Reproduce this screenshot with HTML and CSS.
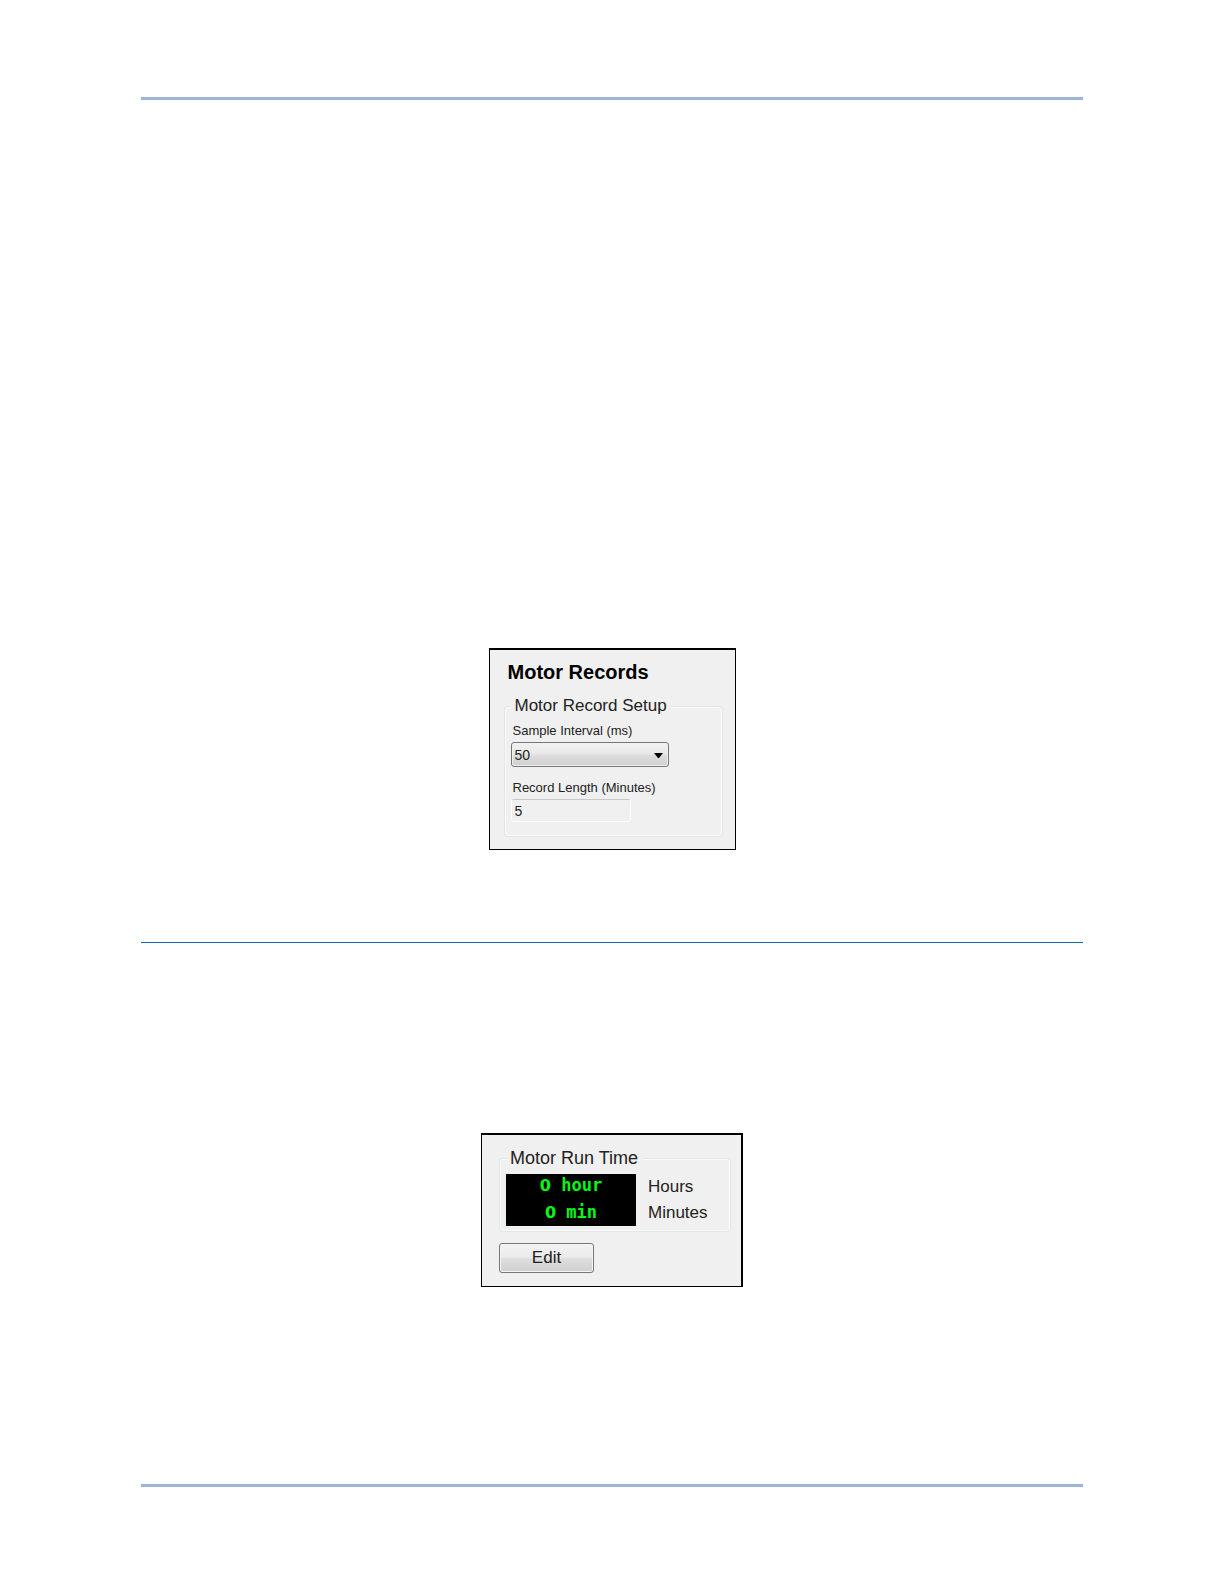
FILE: index.html
```
<!DOCTYPE html>
<html lang="en">
<head>
  <meta charset="UTF-8">
  <meta name="viewport" content="width=device-width, initial-scale=1.0">
  <title>Motor Records</title>
  <link rel="stylesheet" href="styles.css">
</head>
<body>
  <main class="page">
    <hr class="rule">

    <section class="panel records">
      <h1>Motor Records</h1>
      <fieldset>
        <legend>Motor Record Setup</legend>
        <label for="interval">Sample Interval (ms)</label>
        <div class="dropdown">
          <select id="interval">
            <option>50</option>
          </select>
          <svg class="arrow" viewBox="0 0 9 5" aria-hidden="true"><path d="M0 0h9L5 5H4z"/></svg>
        </div>
        <label for="length">Record Length (Minutes)</label>
        <input id="length" type="text" value="5" readonly>
      </fieldset>
    </section>

    <hr class="rule section-rule">

    <section class="panel runtime">
      <fieldset>
        <legend>Motor Run Time</legend>
        <div class="readout">
          <div class="display">
            <div><span class="digit">0</span> hour</div>
            <div><span class="digit">0</span> min</div>
          </div>
          <div class="units">
            <div>Hours</div>
            <div>Minutes</div>
          </div>
        </div>
      </fieldset>
      <button type="button">Edit</button>
    </section>

    <hr class="rule">
  </main>
</body>
</html>
```

FILE: styles.css
```
* {
    box-sizing: border-box;
}

body {
    margin: 0;
    background: white;
    color: #222;
    font-family: "Liberation Sans", Arial, sans-serif;
}

.page {
    display: flex;
    flex-direction: column;
    align-items: center;
    padding: 97px 141px;
}

.rule {
    width: 100%;
    height: 3px;
    margin: 0;
    border: none;
    background: #9db4d9;
}

.section-rule {
    height: 1px;
    background: #1b68ac;
}

.panel {
    background: #f0f0f0;
    border: 1px solid black;
    border-top-width: 2px;
}

.records {
    width: 247px;
    margin: 548px 0 92px;
    padding: 10px 12px 12px 14px;
}

.runtime {
    width: 262px;
    margin: 190px 0 197px;
    padding: 13px 10px 13px 17px;
    border-right-width: 2px;
}

h1 {
    margin: 0 0 12px 4px;
    color: black;
    font-size: 20px;
    line-height: 24px;
}

fieldset {
    min-width: 0;
    margin: 0;
    border: 1px solid #e1e6e8;
    border-radius: 4px;
    box-shadow: inset 0 0 0 1px #fafafa;
}

legend {
    padding: 0 4px;
    background: #f0f0f0;
    font-size: 17px;
    line-height: 20px;
}

.records fieldset {
    padding: 7px 6px 14px;
}

label {
    display: block;
    margin-bottom: 3px;
    padding-left: 2px;
    font-size: 13px;
    line-height: 16px;
}

.dropdown {
    position: relative;
    width: 158px;
    margin-bottom: 13px;
}

select,
input {
    display: block;
    margin: 0;
    padding: 0 3px;
    color: #222;
    font-family: inherit;
    font-size: 14px;
}

select {
    width: 100%;
    height: 25px;
    appearance: none;
    border: 1px solid #777;
    border-radius: 3px;
    background: linear-gradient(#f1f1f1 0%, #e9e9e9 45%, #dcdcdc 55%, #d0d0d0 100%);
    box-shadow: inset 0 0 0 1px #f0f0f0;
}

.arrow {
    position: absolute;
    top: 11px;
    right: 6px;
    width: 9px;
    height: 5px;
    pointer-events: none;
}

input {
    width: 120px;
    height: 23px;
    border: 1px solid #fcfcfc;
    border-top-color: #c8c8c8;
    border-radius: 3px;
    background: #f0f0f0;
}

.runtime fieldset {
    padding: 6px 6px 5px;
}

.runtime legend {
    font-size: 18px;
}

.readout {
    display: flex;
    gap: 12px;
}

.display {
    display: flex;
    flex-direction: column;
    gap: 4px;
    width: 130px;
    height: 52px;
    background: black;
    color: #00fa14;
    font: bold 17px/22px "DejaVu Sans Mono", monospace;
    text-align: center;
}

/* plain zero, without the dot of the mono face */
.digit {
    font-family: "DejaVu Sans", sans-serif;
    font-size: 16px;
}

.units {
    font-size: 17px;
    line-height: 26px;
}

button {
    display: block;
    width: 95px;
    height: 30px;
    margin-top: 11px;
    padding: 0;
    border: 1px solid #777;
    border-radius: 3px;
    background: linear-gradient(#f2f2f2 0%, #ebebeb 45%, #dddddd 55%, #d0d0d0 100%);
    box-shadow: inset 0 0 0 1px #f4f4f4;
    color: #222;
    font-family: inherit;
    font-size: 17px;
}
```
